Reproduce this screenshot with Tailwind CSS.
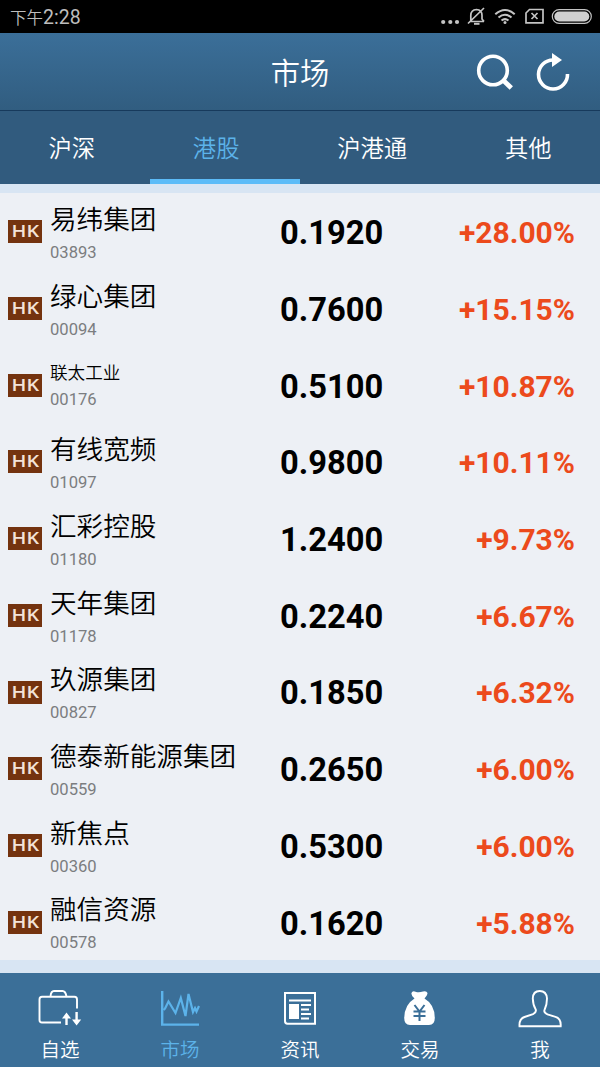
<!DOCTYPE html>
<html lang="zh-CN">
<head>
<meta charset="utf-8">
<title>市场</title>
<script src="https://cdn.jsdelivr.net/npm/@tailwindcss/browser@4"></script>
</head>
<body class="w-[600px] h-[1067px] overflow-hidden flex flex-col bg-[#d8e5f3] font-['Roboto','Noto_Sans_CJK_SC',sans-serif]">
<div class="h-[33px] shrink-0 bg-black flex items-center justify-between pl-[10px] text-[#bdbdbd]">
  <div class="flex items-baseline text-[16.5px] leading-[33px] pt-[2px] font-[350]"><span>下午</span><span class="text-[19.5px] font-normal">2:28</span></div>
  <svg width="170" height="33" viewBox="0 0 170 33" fill="none" stroke="#c4c4c4">
    <g fill="#c4c4c4" stroke="none"><circle cx="13.2" cy="22" r="2.1"/><circle cx="20.3" cy="22" r="2.1"/><circle cx="27" cy="22" r="2.1"/></g>
    <path d="M39.5 21.5H54M40.8 21V15.5C40.8 11.500 42.500 9.700 46.500 9.500C50.500 9.700 52 11.500 52 15.500V19L54 21.500M38 23.500L54 8" stroke-width="1.700"/>
    <path d="M44 23.800H49.500" stroke-width="2"/>
    <path d="M65.300 14.200Q75 5.800 84.700 14.200M68.500 17.500Q75 12 81.500 17.500M71.500 20.500Q75 17.800 78.500 20.500" stroke-width="2.100"/>
    <circle cx="75" cy="22.500" r="1.500" fill="#c4c4c4" stroke="none"/>
    <path d="M99.500 9.500H113V22.800H96V13Z" stroke-width="1.700"/>
    <path d="M101.500 13L107.500 19M107.500 13L101.500 19" stroke-width="1.700"/>
    <rect x="122.300" y="9.700" width="39" height="13.600" rx="6.800" stroke-width="1.200"/>
    <rect x="124.300" y="11.500" width="35" height="10" rx="5" fill="#d0d0d0" stroke="none"/>
  </svg>
</div>
<header class="h-[77px] shrink-0 bg-linear-to-b from-[#3b6f99] to-[#315d80] relative flex items-center justify-center">
  <h1 class="text-white text-[29.3px] leading-[40px] pt-[4px] font-[350]">市场</h1>
  <svg class="absolute right-0 top-0" width="130" height="77" viewBox="470 33 130 77" fill="none" stroke="white">
    <circle cx="493" cy="70.500" r="14.300" stroke-width="3.600"/>
    <path d="M503 80L511.300 88" stroke-width="4.800"/>
    <path d="M553.500 60A14.500 14.500 0 1 0 567.500 74" stroke-width="3.600"/>
    <path d="M552 53L562 60L552 67Z" fill="white" stroke="none"/>
  </svg>
</header>
<nav class="h-[74px] shrink-0 bg-[#315b7e] border-t border-[#173a5c] relative flex items-center justify-between px-[48.5px] pt-[3px] text-[23.3px] leading-[34px] text-white font-[350]">
  <span>沪深</span><span class="text-[#5cb3ea]">港股</span><span>沪港通</span><span>其他</span>
  <i class="absolute left-[150px] bottom-0 w-[150px] h-[5px] bg-[#5cbcf8]"></i>
</nav>
<main id="list" class="mt-[9px] h-[767px] shrink-0 bg-[#edf0f5] flex flex-col"></main>
<footer class="mt-auto h-[94px] shrink-0 bg-[#3b6f98] grid grid-cols-5 text-white text-[19.5px] leading-[30px] text-center font-[350]">
  <div class="flex flex-col items-center">
    <svg class="mt-[12px] mb-[1px]" width="50" height="50" viewBox="35 985 50 50" fill="none" stroke="white" stroke-width="1.900">
      <path d="M61 1022.500H42Q39.500 1022.500 39.500 1020V999.500Q39.500 996.800 42 996.800H74.500Q77 996.800 77 999.500V1008.500M50.500 996.500Q51 991 54 991H62.500Q65.500 991 66.500 996.500"/>
      <path d="M66.500 1025V1016M76.600 1012V1021" stroke-width="2.400"/>
      <path d="M62 1018.500L66.500 1012.500L71 1018.500ZM72 1019.500H81.200L76.600 1025.500Z" fill="white" stroke="none"/>
    </svg><span>自选</span>
  </div>
  <div class="flex flex-col items-center text-[#5cb3ea]">
    <svg class="mt-[12px] mb-[1px]" width="50" height="50" viewBox="155 985 50 50" fill="none" stroke="#5cb3ea">
      <path d="M162.200 991V1024.600H199" stroke-width="2.400"/>
      <path d="M163.500 1010L165 1008.500L168.500 1001.500L175.500 1013L180.800 998L185.500 1016L188.500 994L193 1012L195 1008L196.500 1011.500L199 1006" stroke-width="2.200"/>
    </svg><span>市场</span>
  </div>
  <div class="flex flex-col items-center">
    <svg class="mt-[12px] mb-[1px]" width="50" height="50" viewBox="275 985 50 50" fill="none" stroke="white">
      <path d="M285 993H315V1023.800H287.500Q285 1023.800 285 1021Z" stroke-width="2"/>
      <path d="M289 1000.400H311M301 1005H311M301 1009.500H309M301 1014H311M301 1018.500H309" stroke-width="2"/>
      <path d="M289 1004H299V1019H289Z" fill="white" stroke="none"/>
    </svg><span>资讯</span>
  </div>
  <div class="flex flex-col items-center">
    <svg class="mt-[12px] mb-[1px]" width="50" height="50" viewBox="395 985 50 50" fill="none">
      <path d="M411.500 993Q412.500 990.500 415.500 991.800Q419 993 423 991.500Q426.500 990.500 427.500 993Q427.500 995 424.500 998.500Q434.800 1004.500 434.800 1018Q434.800 1025 429 1025H410Q404.200 1025 404.200 1018Q404.500 1004.500 414.500 998.500Q411 995.500 411.500 993Z" fill="white"/>
      <path d="M414.500 1005L419.500 1011.500L424.500 1005M419.500 1011V1021M413.500 1011.500H425.500M413.500 1016H425.500" stroke="#3b6f98" stroke-width="2"/>
    </svg><span>交易</span>
  </div>
  <div class="flex flex-col items-center">
    <svg class="mt-[12px] mb-[1px]" width="50" height="50" viewBox="515 985 50 50" fill="none" stroke="white" stroke-width="1.900">
      <path d="M519.500 1026.200H560.700Q561.200 1018.500 555.500 1016.800L547.500 1014.300Q543.500 1012.500 544.500 1010Q547 1005 547 998.500Q546.500 991 539.700 991Q533 991 532.800 998.500Q533 1005 535.500 1009Q537 1012 533 1014.200L524.500 1017Q519 1019 519.500 1026.200Z"/>
    </svg><span>我</span>
  </div>
</footer>
<script>
const rows = [
  ["易纬集团","03893","0.1920","+28.00%"],
  ["绿心集团","00094","0.7600","+15.15%"],
  ["联太工业","00176","0.5100","+10.87%"],
  ["有线宽频","01097","0.9800","+10.11%"],
  ["汇彩控股","01180","1.2400","+9.73%"],
  ["天年集团","01178","0.2240","+6.67%"],
  ["玖源集团","00827","0.1850","+6.32%"],
  ["德泰新能源集团","00559","0.2650","+6.00%"],
  ["新焦点","00360","0.5300","+6.00%"],
  ["融信资源","00578","0.1620","+5.88%"]
];
document.getElementById("list").innerHTML = rows.map(([name, code, price, change]) => {
  const title = name === "联太工业" ? "text-[17.6px] leading-[26px] pt-[6px]" : "text-[26.6px] leading-[38px]";
  return `<div class="flex-1 min-h-0 flex items-start pl-[8px] pr-[25px]">
    <svg class="mt-[27.3px] shrink-0" width="34" height="23" viewBox="0 0 34 23"><rect width="34" height="23" fill="#74330f"/><text transform="translate(17.3 17.300) scale(1.2 1)" text-anchor="middle" font-family="Open Sans" font-weight="600" font-size="16.500" fill="#f3e3d8">HK</text></svg>
    <div class="w-[238px] pl-[8px] pt-[8px] whitespace-nowrap">
      <div class="${title} text-black font-[350]">${name}</div>
      <div class="mt-[4px] text-[16.6px] leading-[20px] text-[#7b7d80]">${code}</div>
    </div>
    <div class="mt-[20.2px] text-[32.7px] leading-[40px] font-bold text-black">${price}</div>
    <div class="mt-[20.2px] ml-auto text-[30px] leading-[40px] font-bold text-[#ec4a1c]">${change}</div>
  </div>`;
}).join("");
</script>
</body>
</html>
